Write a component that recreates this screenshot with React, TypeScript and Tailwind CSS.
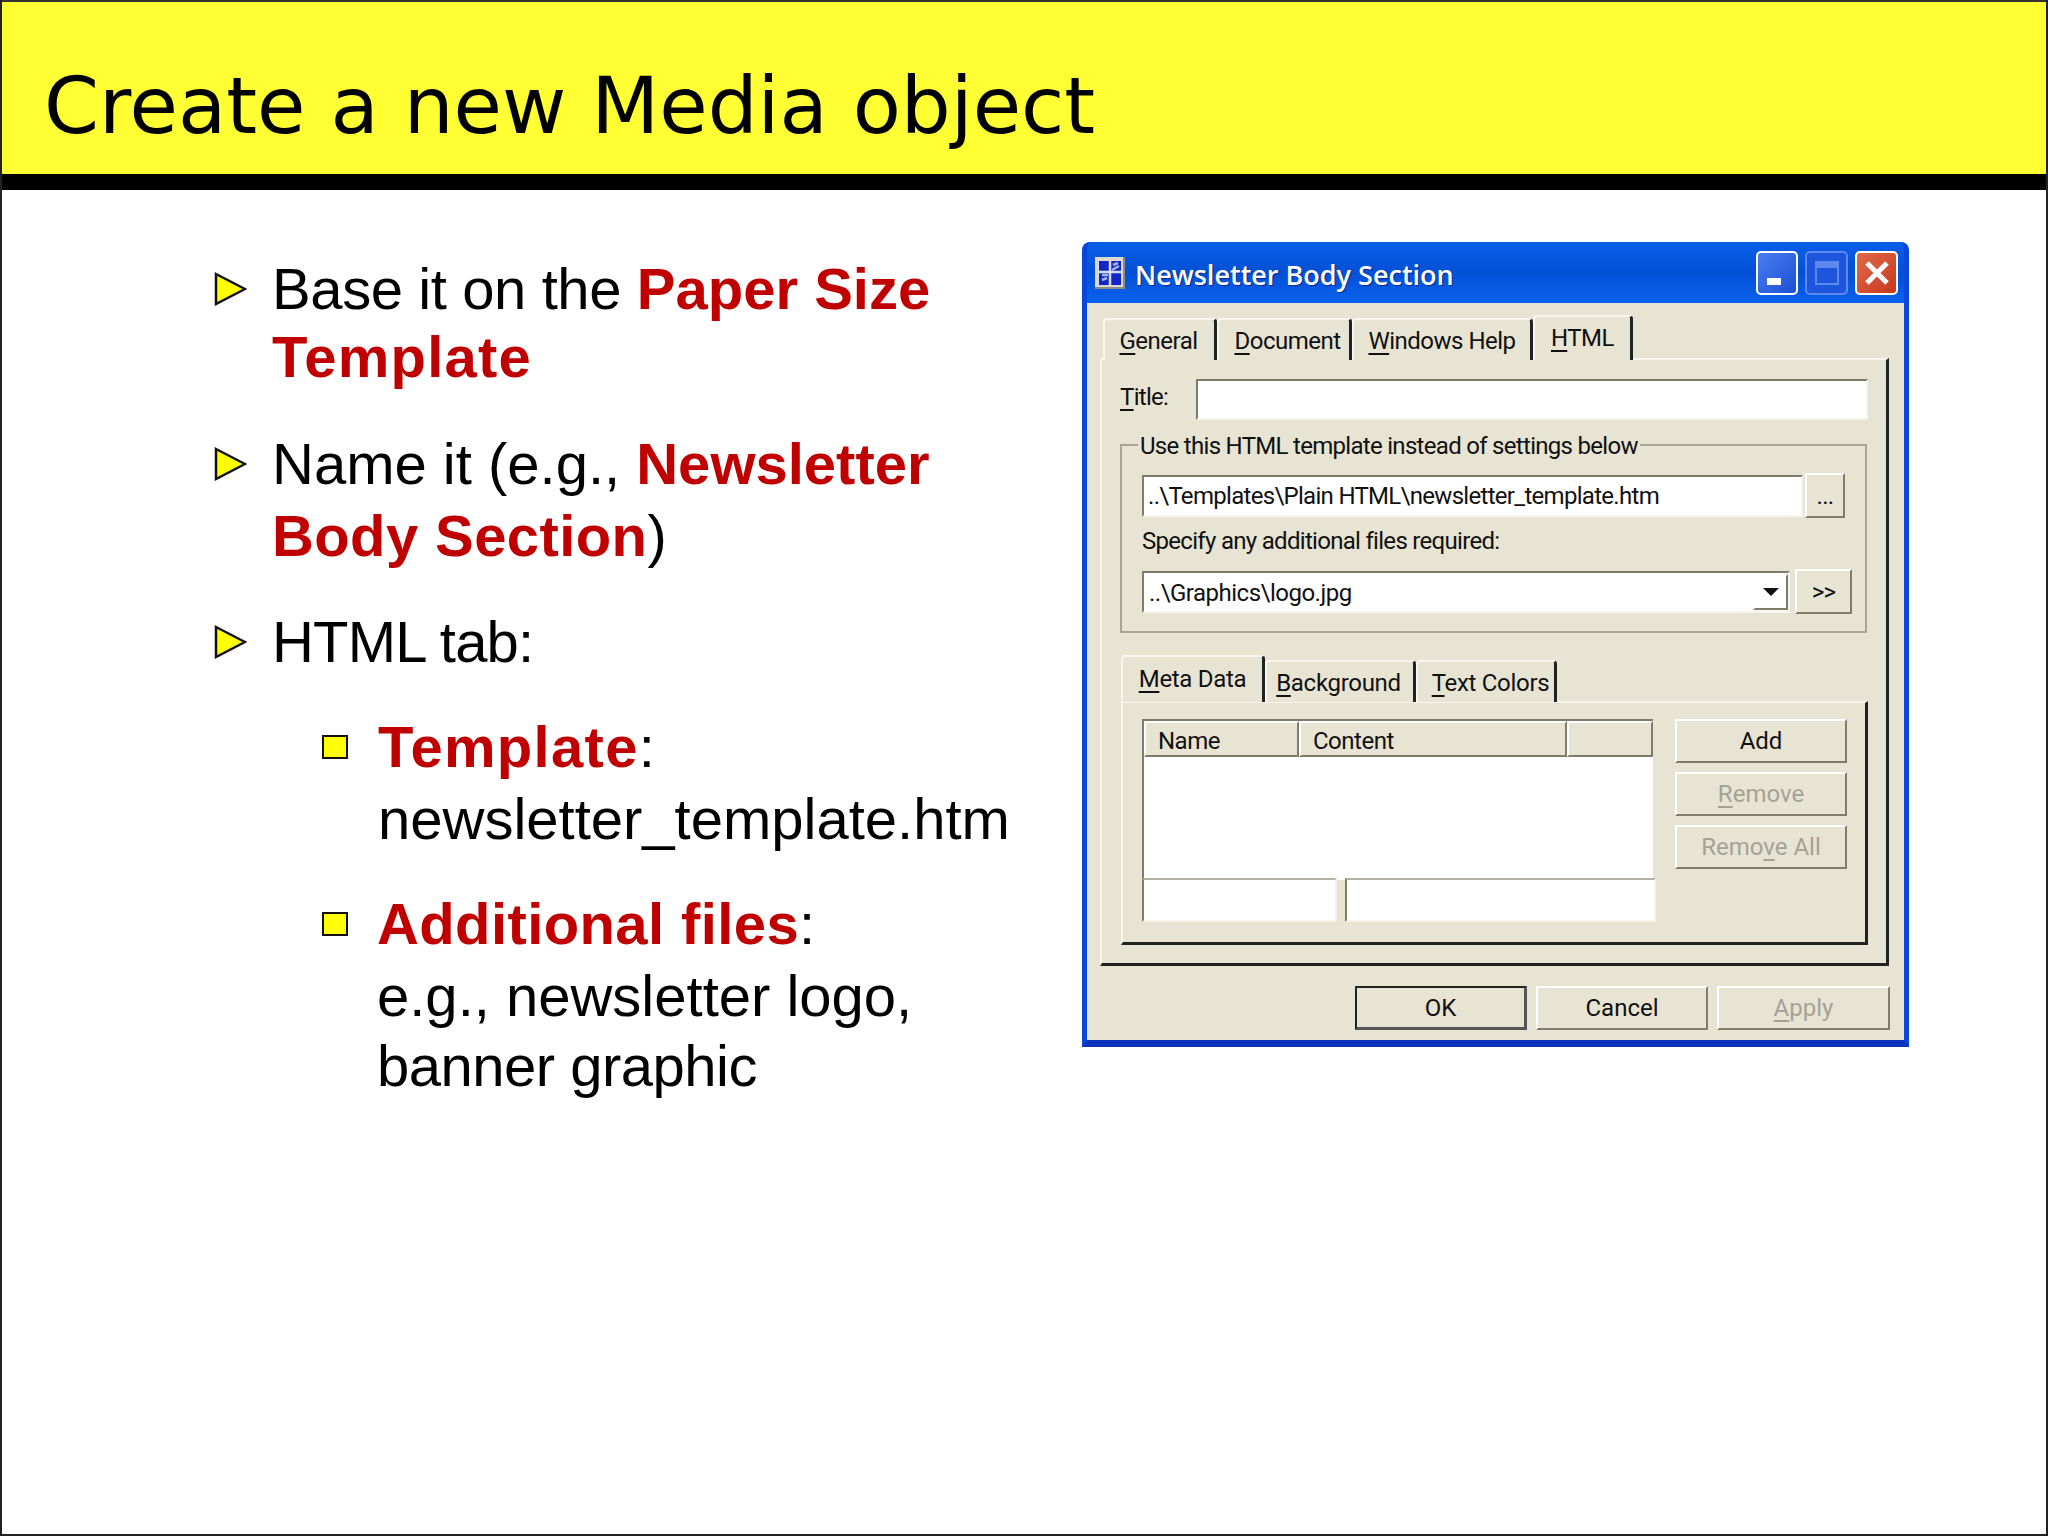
const raised = "border-2 border-t-white border-l-white border-r-[#7f7c6c] border-b-[#7f7c6c]";
const sunken = "border-2 border-t-[#7f7c6c] border-l-[#7f7c6c] border-r-[#f6f4ea] border-b-[#f6f4ea]";
const uiFont = "font-['Roboto','Liberation_Sans',sans-serif] text-[24px] text-[#111] tracking-[-0.7px]";

const Key = ({ children }: { children: string }) => (
  <span className="underline decoration-2 underline-offset-[4px]">{children}</span>
);

const Triangle = () => (
  <svg width="33" height="34" viewBox="0 0 33 34">
    <polygon points="2,2 31,17 2,32" fill="#ffff00" stroke="#111" strokeWidth="2.5" />
  </svg>
);

const Square = () => <div className="h-[24px] w-[26px] border-2 border-[#111] bg-[#ffff00]" />;

const Red = ({ className, children }: { className?: string; children: string }) => (
  <span className={`font-bold text-[#c00000] ${className ?? ""}`}>{children}</span>
);

const Bullets = () => (
  <div className="w-[1080px] pl-[212px] pt-[65px] font-['Liberation_Sans',Arial,sans-serif] text-[58px] text-black">
    <div className="flex">
      <div className="flex h-[68px] w-[58px] items-center">
        <Triangle />
      </div>
      <div className="leading-[68px]">
        <div>
          <span className="tracking-[-0.4px]">Base it on the </span>
          <Red>Paper Size</Red>
        </div>
        <div>
          <Red className="tracking-[1.2px]">Template</Red>
        </div>
      </div>
    </div>
    <div className="mt-[37px] flex">
      <div className="flex h-[72px] w-[58px] items-center">
        <Triangle />
      </div>
      <div className="leading-[72px]">
        <div>
          Name it (e.g., <Red>Newsletter</Red>
        </div>
        <div>
          <Red className="tracking-[0.4px]">Body Section</Red>)
        </div>
      </div>
    </div>
    <div className="mt-[36px] flex">
      <div className="flex h-[68px] w-[58px] items-center">
        <Triangle />
      </div>
      <div className="leading-[68px] tracking-[-0.8px]">HTML tab:</div>
    </div>
    <div className="ml-[108px] mt-[35px] flex">
      <div className="flex h-[72px] w-[56px] items-center">
        <Square />
      </div>
      <div className="leading-[72px]">
        <div>
          <Red className="tracking-[1.3px]">Template</Red>:
        </div>
        <div>newsletter_template.htm</div>
      </div>
    </div>
    <div className="ml-[108px] mt-[33px] flex">
      <div className="flex h-[72px] w-[55px] items-center">
        <Square />
      </div>
      <div className="leading-[72px]">
        <div>
          <Red className="tracking-[0.4px]">Additional files</Red>:
        </div>
        <div>e.g., newsletter logo,</div>
        <div className="leading-[68px] tracking-[-0.5px]">banner graphic</div>
      </div>
    </div>
  </div>
);

const WindowIcon = () => (
  <svg width="30" height="32" viewBox="0 0 30 32" className="shrink-0">
    <rect x="0" y="0" width="30" height="32" fill="#8d8c84" />
    <rect x="0" y="0" width="28" height="30" fill="#dcdad0" />
    <rect x="4" y="4" width="22" height="24" fill="#1226c8" />
    <path d="M15 4v24M4 15h22" stroke="#d8dcf0" strokeWidth="2.5" fill="none" />
    <path d="M17 13l7-4M18 8l5-2M7 18h6M7 23l5-2" stroke="#9fb4ee" strokeWidth="2.5" fill="none" />
  </svg>
);

const TitleBar = () => (
  <div className="flex h-[61px] items-center rounded-t-[8px] bg-gradient-to-b from-[#0a5fe8] via-[#0450d6] to-[#0a62ee] pl-[8px] pr-[6px]">
    <WindowIcon />
    <div className="ml-[10px] mt-[5px] flex-1 font-['Open_Sans',sans-serif] text-[27px] font-semibold text-white [text-shadow:1px_1px_1px_#0a2a90]">
      Newsletter Body Section
    </div>
    <div className="flex h-[44px] w-[42px] items-end rounded-[5px] border-2 border-white bg-gradient-to-br from-[#4a7df0] to-[#1b4fd8] pb-[8px] pl-[9px]">
      <div className="h-[7px] w-[14px] bg-white" />
    </div>
    <div className="ml-[7px] flex h-[44px] w-[43px] items-center justify-center rounded-[5px] border-2 border-[#5d88ee] bg-[#1d56dc]">
      <div className="h-[24px] w-[24px] border-2 border-t-[7px] border-[#5d88ee]" />
    </div>
    <div className="ml-[7px] flex h-[44px] w-[43px] items-center justify-center rounded-[5px] border-2 border-white bg-gradient-to-br from-[#e2684a] to-[#c8361a]">
      <svg width="26" height="26" viewBox="0 0 26 26">
        <path d="M3 3L23 23M23 3L3 23" stroke="#fff" strokeWidth="5" />
      </svg>
    </div>
  </div>
);

const BigTab = ({ width, active, children }: { width: string; active?: boolean; children: React.ReactNode }) => (
  <div
    className={`${width} ${active ? "z-10 h-[45px] pb-[2px]" : "h-[42px] pt-[2px]"} flex items-center justify-center rounded-t-[4px] border-l-2 border-r-[3px] border-t-2 border-l-[#f8f6ee] border-r-[#222] border-t-[#f8f6ee] bg-[#e8e4d4] tracking-[-0.5px]`}
  >
    {children}
  </div>
);

const SmallTab = ({ width, active, children }: { width: string; active?: boolean; children: React.ReactNode }) => (
  <div
    className={`${width} ${active ? "z-10 h-[47px] pb-[1px]" : "h-[42px] pt-[2px]"} flex items-center justify-center rounded-t-[4px] border-l-2 border-r-[3px] border-t-2 border-l-[#f8f6ee] border-r-[#222] border-t-[#f8f6ee] bg-[#e8e4d4] tracking-[-0.3px]`}
  >
    {children}
  </div>
);

const SideButton = ({ disabled, children }: { disabled?: boolean; children: React.ReactNode }) => (
  <div className={`${raised} flex h-[44px] w-[172px] items-center justify-center tracking-[0px] ${disabled ? "text-[#a5a294]" : ""}`}>
    {children}
  </div>
);

const HeaderCell = ({ width, children }: { width: string; children?: string }) => (
  <div className={`${raised} ${width} flex h-[36px] items-center pl-[12px] pt-[3px] tracking-[-0.5px]`}>{children}</div>
);

const DialogBody = () => (
  <div className={`${uiFont} flex-1 bg-[#e8e4d4]`}>
    <div className="ml-[16px] box-content flex h-[45px] items-end pt-[12px]">
      <BigTab width="w-[114px]">
        <span className="-ml-[2px]">
          <Key>G</Key>eneral
        </span>
      </BigTab>
      <BigTab width="w-[135px]">
        <span className="ml-[7px]">
          <Key>D</Key>ocument
        </span>
      </BigTab>
      <BigTab width="w-[181px]">
        <span>
          <Key>W</Key>indows Help
        </span>
      </BigTab>
      <BigTab width="w-[100px]" active>
        <span>
          <Key>H</Key>TML
        </span>
      </BigTab>
    </div>
    <div className="-mt-[2px] ml-[13px] h-[608px] w-[789px] border-b-[3px] border-l-2 border-r-[3px] border-t-2 border-b-[#222] border-l-[#f8f6ee] border-r-[#222] border-t-[#f8f6ee] pl-[18px] pt-[19px]">
      <div className="flex h-[41px] items-center">
        <div className="-mt-[5px] w-[76px]">
          <Key>T</Key>itle:
        </div>
        <div className={`${sunken} h-[41px] w-[672px] bg-white`} />
      </div>

      <div className="relative mt-[24px] h-[189px] w-[747px] border-2 border-[#a8a596] pl-[20px] pt-[27px]">
        <div className="absolute -top-[16px] left-[16px] bg-[#e8e4d4] px-[2px] leading-[32px]">
          Use this HTML template instead of settings below
        </div>
        <div className="flex h-[45px] items-center">
          <div className={`${sunken} flex h-[42px] w-[661px] items-center bg-white pl-[4px]`}>
            ..\Templates\Plain HTML\newsletter_template.htm
          </div>
          <div className={`${raised} ml-[2px] flex h-[45px] w-[40px] items-center justify-center`}>...</div>
        </div>
        <div className="-mt-[3px] flex h-[51px] items-center">Specify any additional files required:</div>
        <div className="mt-[3px] flex h-[45px] items-center">
          <div className={`${sunken} flex h-[42px] w-[648px] items-center bg-white pl-[5px]`}>
            <div className="mt-[2px] flex-1 tracking-[-0.5px]">..\Graphics\logo.jpg</div>
            <div className={`${raised} flex h-[36px] w-[35px] items-center justify-center`}>
              <div className="h-0 w-0 border-x-[8px] border-t-[8px] border-x-transparent border-t-[#111]" />
            </div>
          </div>
          <div className={`${raised} ml-[5px] flex h-[45px] w-[57px] items-center justify-center`}>&gt;&gt;</div>
        </div>
      </div>

      <div className="ml-[1px] mt-[22px] flex h-[47px] items-end">
        <SmallTab width="w-[144px]" active>
          <span>
            <Key>M</Key>eta Data
          </span>
        </SmallTab>
        <SmallTab width="w-[151px]">
          <span className="-ml-[3px]">
            <Key>B</Key>ackground
          </span>
        </SmallTab>
        <SmallTab width="w-[141px]">
          <span className="ml-[9px]">
            <Key>T</Key>ext Colors
          </span>
        </SmallTab>
      </div>
      <div className="-mt-[1px] ml-[1px] flex h-[244px] w-[747px] border-b-[3px] border-l-2 border-r-[3px] border-t-2 border-b-[#222] border-l-[#f8f6ee] border-r-[#222] border-t-[#f8f6ee] pl-[19px] pt-[16px]">
        <div className="w-[514px]">
          <div className="h-[161px] w-[511px] border-2 border-b-0 border-r-0 border-l-[#7f7c6c] border-t-[#7f7c6c] bg-white">
            <div className="flex bg-[#e8e4d4]">
              <HeaderCell width="w-[155px]">Name</HeaderCell>
              <HeaderCell width="w-[268px]">Content</HeaderCell>
              <HeaderCell width="w-[86px]" />
            </div>
          </div>
          <div className="-mt-[2px] flex gap-[8px]">
            <div className={`${sunken} h-[44px] w-[195px] border-t-[#b5b2a2] bg-white`} />
            <div className={`${sunken} h-[44px] w-[311px] border-t-[#b5b2a2] bg-white`} />
          </div>
        </div>
        <div className="ml-[19px] flex flex-col gap-[9px]">
          <SideButton>Add</SideButton>
          <SideButton disabled>
            <span>
              <Key>R</Key>emove
            </span>
          </SideButton>
          <SideButton disabled>
            <span>
              Remo<Key>v</Key>e All
            </span>
          </SideButton>
        </div>
      </div>
    </div>

    <div className="mt-[20px] flex gap-[9px] pl-[268px] tracking-[0px]">
      <div className="flex h-[44px] w-[172px] items-center justify-center border-2 border-b-[3px] border-r-[3px] border-[#222] border-b-[#555] border-r-[#555]">
        OK
      </div>
      <div className={`${raised} flex h-[44px] w-[172px] items-center justify-center`}>Cancel</div>
      <div className={`${raised} flex h-[44px] w-[173px] items-center justify-center text-[#a5a294]`}>
        <span>
          <Key>A</Key>pply
        </span>
      </div>
    </div>
  </div>
);

const Dialog = () => (
  <div className="mt-[52px] flex h-[805px] w-[827px] flex-col rounded-t-[8px] border-x-[5px] border-b-[7px] border-x-[#0a46dc] border-b-[#0b32b8] bg-[#0a5ae4]">
    <TitleBar />
    <DialogBody />
  </div>
);

export default function App() {
  return (
    <div className="h-[1536px] w-[2048px] overflow-hidden border-x-2 border-b-2 border-[#222] bg-white">
      <div className="flex h-[174px] items-end border-t-2 border-[#333] bg-[#ffff33] pb-[20px] pl-[42px] font-['DejaVu_Sans',Verdana,sans-serif] text-[78.7px] leading-[96px] text-black">
        Create a new Media object
      </div>
      <div className="h-[16px] bg-black" />
      <div className="flex">
        <Bullets />
        <Dialog />
      </div>
    </div>
  );
}
